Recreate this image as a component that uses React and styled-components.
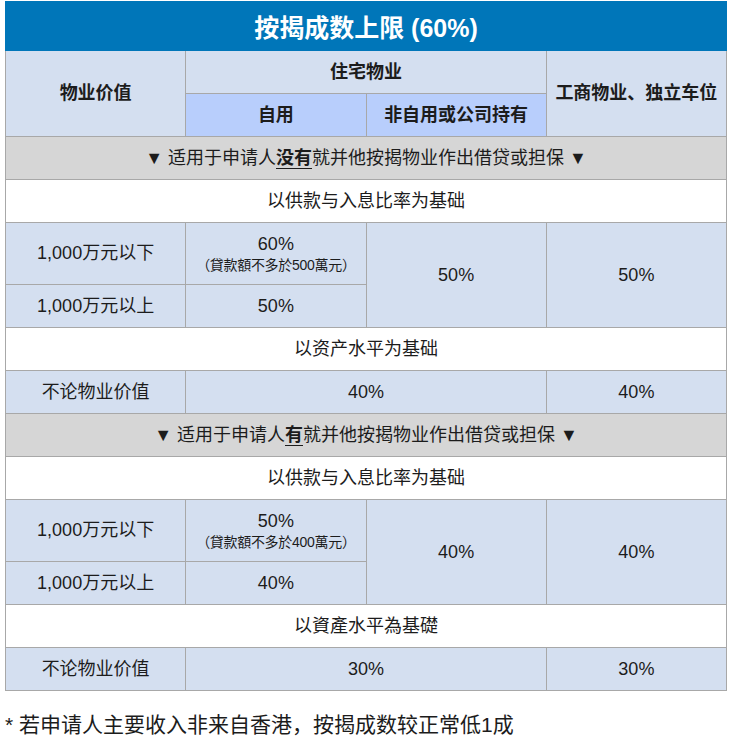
import styled, { createGlobalStyle } from "styled-components";

const GlobalStyle = createGlobalStyle`
  body {
    margin: 0;
    background: #fff;
    font-family: "Liberation Sans", "Noto Sans CJK SC", sans-serif;
    color: #1c1c1c;
  }
`;

const Page = styled.div`
  padding: 1px 5px 0 5px;
`;

const Table = styled.table`
  width: 722px;
  border-collapse: collapse;
  table-layout: fixed;
  font-size: 18px;
`;

const Title = styled.th`
  background: #0076b9;
  border: 1px solid #0076b9;
  color: #fff;
  font-size: 25px;
  font-weight: 700;
  height: 48px;
  padding: 0;
  text-align: center;
`;

const bgs = {
  blue: "#d4dff0",
  sub: "#b8cefc",
  gray: "#d6d6d6",
  white: "#fff",
};

const Cell = styled.td`
  border: 1px solid #a8a8a8;
  background: ${({ $bg }) => bgs[$bg || "blue"]};
  font-weight: ${({ $bold }) => ($bold ? 700 : 400)};
  height: ${({ $h }) => $h || 42}px;
  padding: 0;
  text-align: center;
  vertical-align: middle;
  line-height: 1.15;
`;

const Mark = styled.span`
  font-weight: 700;
  text-decoration: underline;
  text-underline-offset: 4px;
`;

const Note = styled.div`
  font-size: 14px;
  margin-top: 3px;
  letter-spacing: -0.3px;
`;

const Footnote = styled.p`
  margin: 17px 0 0 0;
  font-size: 21px;
`;

const Section = ({ mark }) => (
  <tr>
    <Cell colSpan={4} $bg="gray">
      ▼ 适用于申请人<Mark>{mark}</Mark>就并他按揭物业作出借贷或担保 ▼
    </Cell>
  </tr>
);

const Basis = ({ children }) => (
  <tr>
    <Cell colSpan={4} $bg="white">{children}</Cell>
  </tr>
);

const Block = ({ mark, high, note, low, other, asset, assetLabel }) => (
  <>
    <Section mark={mark} />
    <Basis>以供款与入息比率为基础</Basis>
    <tr>
      <Cell $h={61}>1,000万元以下</Cell>
      <Cell $h={61}>
        {high}
        <Note>（貸款額不多於{note}萬元）</Note>
      </Cell>
      <Cell rowSpan={2}>{other}</Cell>
      <Cell rowSpan={2}>{other}</Cell>
    </tr>
    <tr>
      <Cell>1,000万元以上</Cell>
      <Cell>{low}</Cell>
    </tr>
    <Basis>{assetLabel}</Basis>
    <tr>
      <Cell>不论物业价值</Cell>
      <Cell colSpan={2}>{asset}</Cell>
      <Cell>{asset}</Cell>
    </tr>
  </>
);

export default function App() {
  return (
    <Page>
      <GlobalStyle />
      <Table>
        <colgroup>
          <col />
          <col />
          <col />
          <col />
        </colgroup>
        <thead>
          <tr>
            <Title colSpan={4}>按揭成数上限 (60%)</Title>
          </tr>
        </thead>
        <tbody>
          <tr>
            <Cell rowSpan={2} $bold>物业价值</Cell>
            <Cell colSpan={2} $bold>住宅物业</Cell>
            <Cell rowSpan={2} $bold>工商物业、独立车位</Cell>
          </tr>
          <tr>
            <Cell $bg="sub" $bold>自用</Cell>
            <Cell $bg="sub" $bold>非自用或公司持有</Cell>
          </tr>
          <Block
            mark="没有"
            high="60%"
            note="500"
            low="50%"
            other="50%"
            asset="40%"
            assetLabel="以资产水平为基础"
          />
          <Block
            mark="有"
            high="50%"
            note="400"
            low="40%"
            other="40%"
            asset="30%"
            assetLabel="以資產水平為基礎"
          />
        </tbody>
      </Table>
      <Footnote>* 若申请人主要收入非来自香港，按揭成数较正常低1成</Footnote>
    </Page>
  );
}
